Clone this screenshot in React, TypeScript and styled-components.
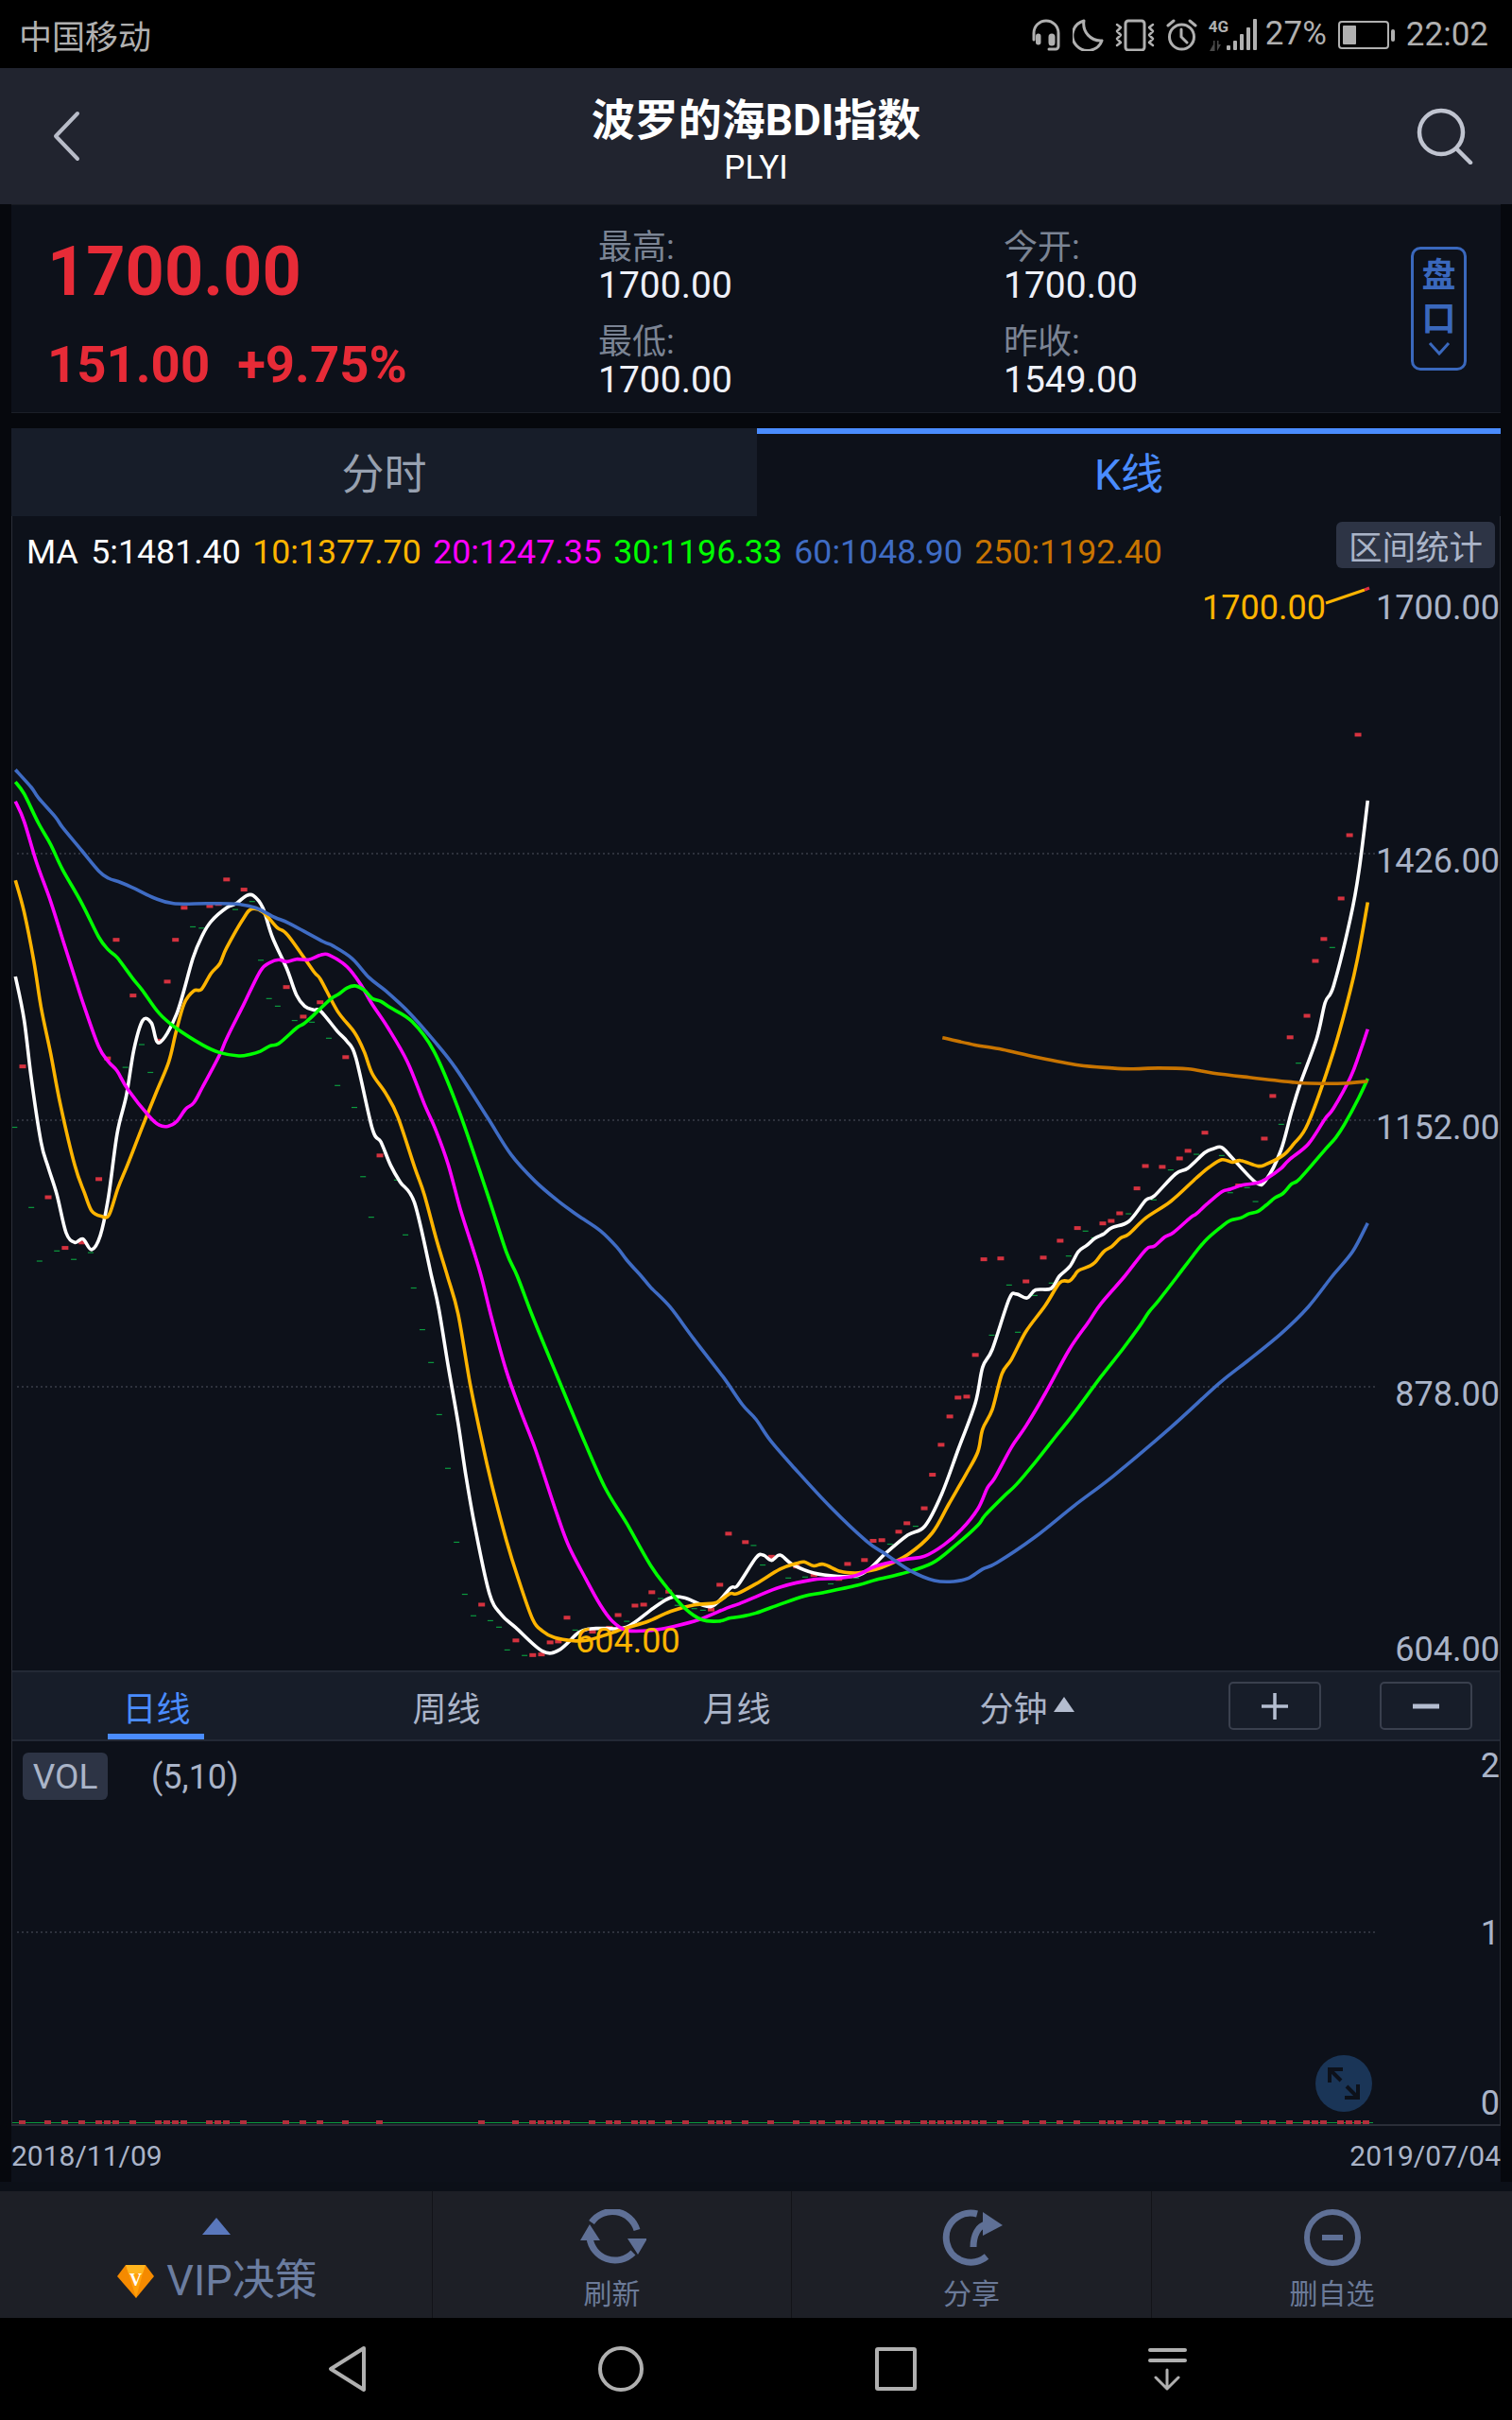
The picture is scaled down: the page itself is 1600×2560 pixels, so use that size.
import React from 'react'
import styled, { createGlobalStyle } from 'styled-components'

const FONT = `Roboto, "Noto Sans CJK SC", sans-serif`

type Pt = [number, number]

// points were read from enlarged parts of the chart, each part has its own origin and scale
const trace = (ox: number, oy: number, sx: number, sy: number) => (...n: number[]): Pt[] => {
  const out: Pt[] = []
  for (let i = 0; i < n.length; i += 2) out.push([ox + n[i] / sx, oy + n[i + 1] / sy])
  return out
}
const upL = trace(0, 650, 1.96, 2.24)
const upR = trace(900, 650, 2.24, 2.24)
const lowL = trace(0, 1350, 1.96, 2.904)
const lowR = trace(800, 1350, 1.96, 2.904)

// catmull-rom through the traced points
const toPath = (pts: Pt[]) => {
  let d = `M${pts[0][0].toFixed(1)} ${pts[0][1].toFixed(1)}`
  for (let i = 0; i < pts.length - 1; i++) {
    const a = pts[Math.max(i - 1, 0)]
    const b = pts[i]
    const c = pts[i + 1]
    const e = pts[Math.min(i + 2, pts.length - 1)]
    const c1x = b[0] + (c[0] - a[0]) / 6
    const c1y = b[1] + (c[1] - a[1]) / 6
    const c2x = c[0] - (e[0] - b[0]) / 6
    const c2y = c[1] - (e[1] - b[1]) / 6
    d += `C${c1x.toFixed(1)} ${c1y.toFixed(1)} ${c2x.toFixed(1)} ${c2y.toFixed(1)} ${c[0].toFixed(1)} ${c[1].toFixed(1)}`
  }
  return d
}

const MA5 = [
  ...upL(32,858,50,960,65,1100,85,1250,100,1310,118,1375,137,1465,155,1488,172,1480,190,1505,208,1472,225,1380,243,1230,262,1140,278,1030,296,962,314,968,330,1015,366,948,400,815,420,760,438,727,470,695,490,685,510,667,525,666,545,695,565,765,595,840,615,902,632,928,650,937,665,940,700,988,720,1012,738,1050,772,1218,790,1250,810,1305,830,1345,860,1395),
  ...lowL(895,0,910,100,930,280,950,450,965,600,985,770,1015,975,1040,1040,1070,1080,1125,1152,1160,1148,1200,1095,1225,1083,1255,1082,1300,1078,1355,1020,1390,988,1420,988,1475,1015,1515,958,1530,950),
  ...lowR(0,865,15,857,32,873,50,857,75,885,120,912,170,922,210,920,235,900,270,850,315,795,350,768,385,670,420,530,455,390,470,280,490,225,525,70,540,55,562,67,580,42,612,38),
  ...upR(495,1568,520,1545,540,1510,560,1495,580,1478,600,1468,620,1453,660,1438,700,1388,720,1378,770,1326,800,1312,840,1275,860,1266,880,1263,905,1288,962,1347,985,1340,1020,1270,1045,1180,1065,1115,1105,1005,1125,920,1145,880,1185,720,1205,610,1226,441),
]
const MA10 = [
  ...upL(32,630,50,705,70,820,85,930,105,1040,125,1160,155,1305,175,1370,190,1413,210,1426,226,1423,245,1358,265,1303,295,1215,325,1130,350,1060,365,990,382,922,402,892,418,888,438,850,456,827,470,790,505,720,522,698,545,705,575,742,597,760,650,845,665,865,700,940,735,990,755,1035,772,1088,800,1135,825,1190,860,1310,880,1375,905,1480),
  ...lowL(928,0,950,115,975,330,1000,510,1020,640,1050,810,1075,930,1105,1055,1125,1090,1150,1110,1190,1120,1220,1118,1260,1100,1300,1080,1345,1060,1390,1030,1440,1010,1480,1005,1495,995,1515,975,1530,975),
  ...lowR(0,945,50,900,85,882,100,878,120,890,140,885,175,907,205,912,225,908,260,895,315,855,365,790,400,700,435,610,460,540,470,470,490,410,510,300,530,255,560,170,600,90,630,20,650,15),
  ...upR(530,1568,540,1555,565,1545,580,1535,600,1510,620,1497,640,1478,660,1468,700,1430,760,1390,820,1335,850,1310,880,1292,905,1298,925,1294,965,1307,985,1303,1025,1282,1050,1255,1085,1205,1145,1035,1185,890,1205,800,1226,682),
]
const MA20 = [
  ...upL(32,443,50,490,75,585,105,680,130,770,155,860,175,930,205,1025,225,1060,243,1082,265,1125,310,1190,330,1210,348,1213,366,1202,385,1172,402,1157,420,1120,455,1045,470,1005,505,925,540,845,560,825,578,818,595,823,615,817,640,818,665,807,683,807,720,835,750,880,770,920,805,980,845,1060,880,1160,905,1225,930,1305,955,1410,980,1500),
  ...lowL(998,0,1020,130,1050,290,1080,415,1110,530,1155,730,1180,830,1215,930,1245,1010,1270,1060,1300,1088,1350,1088,1400,1075,1450,1055,1510,1018,1530,1008),
  ...lowR(0,985,50,955,120,932,170,928,210,918,250,890,310,870,350,860,390,825,425,780,460,715,480,650,495,620,530,525,560,460,600,360,650,225,690,140,715,85),
  ...upR(650,1568,700,1505,720,1497,745,1475,765,1465,805,1430,820,1420,845,1397,880,1368,900,1362,930,1352,965,1347,985,1338,1020,1313,1040,1292,1085,1255,1125,1195,1145,1170,1185,1097,1205,1045,1226,983),
]
const MA30 = [
  ...upL(32,397,50,425,80,495,105,545,130,605,170,685,205,765,225,795,243,813,275,862,295,890,330,945,365,980,420,1020,455,1038,495,1046,520,1042,540,1035,560,1022,578,1017,615,980,630,970,650,950,685,912,702,900,720,885,737,880,755,890,772,910,790,917,810,932,855,965,900,1035,950,1170,1010,1370,1050,1510),
  ...lowL(1073,0,1105,125,1155,305,1210,500,1255,650,1300,760,1350,890,1385,960,1420,1020,1455,1055,1490,1060,1515,1050,1540,1045),
  ...lowR(0,1035,50,1008,100,983,140,972,210,950,250,932,300,915,365,882,415,825,460,765,475,735,515,675,540,640,580,570,620,495,655,430,715,310,760,225,795,155,815,110,835,75),
  ...upR(775,1568,800,1535,840,1485,880,1450,900,1436,925,1430,945,1420,965,1415,985,1400,1005,1383,1025,1372,1045,1350,1065,1337,1125,1268,1150,1240,1170,1210,1205,1145,1226,1100),
]
const MA60 = [
  ...upL(32,368,65,410,80,435,115,480,130,505,170,560,205,608,225,625,250,635,280,650,320,672,360,685,430,685,490,686,530,695,570,718,600,732,670,775,690,785,730,815,765,860,800,892,850,945,900,1010,945,1075,1010,1190,1060,1280,1110,1343,1160,1392,1200,1425,1245,1460,1280,1500,1300,1530),
  ...lowL(1330,0,1350,35,1390,95,1440,195,1500,310,1540,395),
  ...lowR(0,440,30,505,80,590,155,710,230,815,270,855,320,905,370,935,410,938,440,928,470,900,500,880,580,800,660,705,740,615,860,465,960,330,1020,260,1090,175,1145,95),
  ...upR(1142,1568,1190,1510,1226,1442),
]
const MA250 = upR(218,1003,295,1020,360,1031,440,1049,540,1068,620,1075,665,1077,730,1075,800,1077,860,1087,945,1097,1045,1108,1090,1111,1170,1111,1226,1106)

const REDS = [
  ...upL(47,1071,100,1381,135,1501,170,1488,205,1338,223,1052,241,771,276,903,330,1010,347,870,364,771,382,695,435,691,453,686,470,628,506,652,594,883,629,953,664,919,717,1049,788,1282),
  ...lowL(999,1009,1070,1119,1105,1164,1123,1162,1141,1125,1158,1122,1176,1049,1229,1092,1264,1080,1282,1041,1317,1012,1335,1009,1352,971,1387,969,1475,1024,1493,948,1511,791,1546,817),
  ...lowR(32,862,84,892,120,918,172,930,190,884,225,872,243,813,261,811,296,785,313,759,349,713,366,610,384,518,402,431,419,373,437,370,455,242,560,16),
  ...upR(316,1528,356,1526,457,1524,497,1484,538,1454,598,1443,618,1437,638,1419,679,1360,699,1307,739,1309,780,1289,800,1271,840,1228,920,1353,981,1242,1001,1141,1042,1002,1082,951,1102,821,1122,769,1163,673,1183,523,1203,285),
]
const GREENS = [
  ...upL(30,1215,65,1405,82,1532,118,1508,153,1528,188,1512,260,1073,294,1019,312,1085,400,740,418,743,488,699,523,680,541,819,558,910,576,928,611,962,647,966,682,1004,700,1116,735,1168,753,1332,770,1428,823,1340,841,1470),
  ...lowL(858,36,876,164,894,265,911,425,929,590,947,817,964,977,982,1043,1017,1058,1035,1078,1052,1148,1088,1165,1193,1087,1300,1060,1370,990,1405,1011,1440,1021,1458,1026,1563,827),
  ...lowR(14,887,67,927,102,924,155,945,208,927,278,823,331,768,489,181,525,27,543,172,578,59,613,21),
  ...upR(517,1520,557,1461,577,1477,659,1420,719,1387,759,1316,820,1279,880,1282,900,1370,940,1358,960,1391,1021,1208,1062,1063,1142,789),
]

const VOL_RED = new Set([0,3,5,7,9,10,11,13,16,17,18,19,22,23,24,26,31,33,35,38,42,54,58,60,61,62,63,64,67,69,70,72,73,74,76,78,81,82,83,85,88,91,93,94,96,97,99,100,101,103,104,106,107,108,109,110,111,112,113,115,118,120,122,124,127,128,129,131,132,134,136,137,139,143,146,147,149,151,152,153,155,156,157,158])
const VOL_SLOTS = Array.from({ length: 159 }, (_, i) => i)

const LINES = [
  { key: 'ma5', color: '#ffffff', pts: MA5 },
  { key: 'ma10', color: '#ffb400', pts: MA10 },
  { key: 'ma20', color: '#ff00ff', pts: MA20 },
  { key: 'ma30', color: '#00ff00', pts: MA30 },
  { key: 'ma60', color: '#3f6cc4', pts: MA60 },
  { key: 'ma250', color: '#c87400', pts: MA250 },
]

const LEGEND = [
  { text: '5:1481.40', color: '#ffffff' },
  { text: '10:1377.70', color: '#ffb400' },
  { text: '20:1247.35', color: '#ff00ff' },
  { text: '30:1196.33', color: '#00ff00' },
  { text: '60:1048.90', color: '#3f6cc4' },
  { text: '250:1192.40', color: '#c87400' },
]

const GRID_Y = [903, 1185, 1467]
const AXIS = [
  { text: '1700.00', y: 655 },
  { text: '1426.00', y: 923 },
  { text: '1152.00', y: 1205 },
  { text: '878.00', y: 1487 },
  { text: '604.00', y: 1757 },
]

const Global = createGlobalStyle`
  html, body { margin: 0; padding: 0; background: #06080d; }
  * { box-sizing: border-box; }
`

const StatusIcons = () => (
  <S.StatusIcons>
    <svg width="32" height="34" viewBox="0 0 32 34" fill="none" stroke="#b0b0b0" strokeWidth="3" strokeLinecap="round">
      <path d="M3 22V15a13 13 0 0 1 26 0v14a3 3 0 0 1-3 3h-7" />
      <rect x="6.500" y="17" width="2.500" height="9" rx="1.200" fill="#b0b0b0" />
      <rect x="20" y="17" width="4" height="10" rx="2" fill="#b0b0b0" />
    </svg>
    <svg width="33" height="34" viewBox="0 0 33 34" fill="none" stroke="#b0b0b0" strokeWidth="3" strokeLinejoin="round">
      <path d="M12 2A16 16 0 1 0 31 23A18 18 0 0 1 12 2z" />
    </svg>
    <svg width="42" height="34" viewBox="0 0 42 34" fill="none" stroke="#b0b0b0" strokeWidth="3" strokeLinecap="round" strokeLinejoin="round">
      <rect x="11" y="2" width="20" height="31" rx="3" />
      <path d="M2 6l4 3-4 4 4 4-4 4 4 4-4 3M40 6l-4 3 4 4-4 4 4 4-4 4 4 3" strokeWidth="2.500" />
    </svg>
    <svg width="33" height="34" viewBox="0 0 33 34" fill="none" stroke="#b0b0b0" strokeWidth="3" strokeLinecap="round">
      <circle cx="16.500" cy="19" r="13" />
      <path d="M16 11v8l6 6M2 7l6-5M31 7l-6-5" />
    </svg>
    <S.Signal>
      <S.NetLabel>4G</S.NetLabel>
      <svg width="53" height="34" viewBox="0 0 53 34">
        <path d="M1 34l4-7v-4h1.500v11zM9 23v11l4-7h-2.500v-4z" fill="#4a4a4a" />
        <rect x="19" y="28" width="4" height="5" rx="1" fill="#b0b0b0" />
        <rect x="26" y="23" width="4" height="10" rx="1" fill="#b0b0b0" />
        <rect x="33" y="16" width="4" height="17" rx="1" fill="#b0b0b0" />
        <rect x="40" y="9" width="4" height="24" rx="1" fill="#b0b0b0" />
        <rect x="47" y="0" width="4" height="33" rx="1" fill="#b0b0b0" />
      </svg>
    </S.Signal>
    <S.Percent>27%</S.Percent>
    <svg width="60" height="30" viewBox="0 0 60 30" fill="none">
      <rect x="1" y="1" width="52" height="28" rx="3" stroke="#b0b0b0" strokeWidth="2" />
      <rect x="5" y="5" width="14" height="20" rx="1" fill="#b0b0b0" />
      <rect x="56" y="9" width="4" height="13" rx="2" fill="#b0b0b0" />
    </svg>
    <S.Clock>22:02</S.Clock>
  </S.StatusIcons>
)

const VipDiamond = () => (
  <svg width="39" height="36" viewBox="0 0 39 36">
    <path d="M9 1h21l9 12-19 23L0 13z" fill="#f58a00" />
    <path d="M9 1h21l-3 9H12z" fill="#ffb51e" />
    <path d="M12 10h15l-7 26z" fill="#ffa00a" />
    <text x="19.500" y="23" textAnchor="middle" fontSize="18" fontWeight="700" fontFamily="Liberation Serif, serif" fill="#ffffff">V</text>
  </svg>
)

const RefreshIcon = () => (
  <svg width="72" height="60" viewBox="0 0 72 60" fill="none" stroke="#5f7096" strokeWidth="7">
    <path d="M14 14A27 27 0 0 1 62 22" />
    <path d="M58 46A27 27 0 0 1 12 30" />
    <path d="M2 33L12 16l11 17zM52 31h21L63 48z" fill="#5f7096" stroke="none" />
  </svg>
)

const ShareIcon = () => (
  <svg width="68" height="60" viewBox="0 0 68 60" fill="none" stroke="#5f7096" strokeWidth="7">
    <path d="M40 5A26 26 0 1 0 50 50" />
    <path d="M36 40c0-12 5-23 14-24" />
    <path d="M46 3l21 14-21 11z" fill="#5f7096" stroke="none" />
  </svg>
)

const RemoveIcon = () => (
  <svg width="60" height="60" viewBox="0 0 60 60" fill="none" stroke="#5f7096" strokeWidth="6">
    <circle cx="30" cy="30" r="27" />
    <path d="M19 30h22" strokeWidth="6" />
  </svg>
)

const PriceChart = () => (
  <S.ChartSvg width="1574" height="1157" viewBox="13 610 1574 1157">
    {GRID_Y.map(y => (
      <S.GridLine key={y} x1="18" x2="1458" y1={y} y2={y} />
    ))}
    {GREENS.map((p, i) => (
      <rect key={i} x={p[0] - 3} y={p[1] - 0.5} width="6" height="1.200" fill="#0b9a3e" />
    ))}
    {REDS.map((p, i) => (
      <rect key={i} x={p[0] - 3.500} y={p[1] - 2} width="7" height="4" fill="#d5323f" />
    ))}
    {LINES.map(l => (
      <S.MaLine key={l.key} d={toPath(l.pts)} stroke={l.color} />
    ))}
    <path d="M1403 638L1444 624" stroke="#ffb400" strokeWidth="3" />
    <path d="M1444 624L1449 622" stroke="#e03040" strokeWidth="3" />
    <S.MarkText x="1272" y="655">1700.00</S.MarkText>
    <S.MarkText x="609" y="1748">604.00</S.MarkText>
    {AXIS.map(a => (
      <S.AxisText key={a.text} x="1587" y={a.y}>{a.text}</S.AxisText>
    ))}
  </S.ChartSvg>
)

const VolumeChart = () => (
  <S.ChartSvg width="1574" height="335" viewBox="13 1914 1574 335">
    <S.GridLine x1="18" x2="1458" y1="2044" y2="2044" />
    <S.AxisText x="1587" y="2057">1</S.AxisText>
    <S.AxisText x="1587" y="2237">0</S.AxisText>
    <rect x="13" y="2245" width="1440" height="1" fill="#0b9a3e" />
    {VOL_SLOTS.filter(i => VOL_RED.has(i)).map(i => (
      <rect key={i} x={20 + i * 9} y="2243" width="7" height="4" fill="#b32f3c" />
    ))}
    <rect x="13" y="2247" width="1574" height="2" fill="#2a2e38" />
  </S.ChartSvg>
)

export default function App() {
  return (
    <S.Page>
      <Global />
      <S.StatusBar>
        <S.Carrier>中国移动</S.Carrier>
        <StatusIcons />
      </S.StatusBar>

      <S.Header>
        <S.BackIcon>
          <svg width="32" height="56" viewBox="0 0 32 56" fill="none" stroke="#b8bcc8" strokeWidth="4" strokeLinecap="round" strokeLinejoin="round">
            <path d="M28 4L5 28l23 24" />
          </svg>
        </S.BackIcon>
        <S.TitleBlock>
          <S.Title>波罗的海BDI指数</S.Title>
          <S.Subtitle>PLYI</S.Subtitle>
        </S.TitleBlock>
        <S.SearchIcon>
          <svg width="62" height="60" viewBox="0 0 62 60" fill="none" stroke="#c0c4d0" strokeWidth="4.500" strokeLinecap="round">
            <circle cx="27" cy="26" r="23" />
            <path d="M43 43l15 15" />
          </svg>
        </S.SearchIcon>
      </S.Header>

      <S.Quote>
        <S.PriceCol>
          <S.Price>1700.00</S.Price>
          <S.Change>
            <span>151.00</span>
            <span>+9.75%</span>
          </S.Change>
        </S.PriceCol>
        <S.StatCol>
          <S.Stat><S.StatLabel>最高:</S.StatLabel><S.StatValue>1700.00</S.StatValue></S.Stat>
          <S.Stat><S.StatLabel>最低:</S.StatLabel><S.StatValue>1700.00</S.StatValue></S.Stat>
        </S.StatCol>
        <S.StatCol>
          <S.Stat><S.StatLabel>今开:</S.StatLabel><S.StatValue>1700.00</S.StatValue></S.Stat>
          <S.Stat><S.StatLabel>昨收:</S.StatLabel><S.StatValue>1549.00</S.StatValue></S.Stat>
        </S.StatCol>
        <S.DepthButton>
          <span>盘</span>
          <span>口</span>
          <svg width="24" height="15" viewBox="0 0 24 15" fill="none" stroke="#3a68bd" strokeWidth="3">
            <path d="M2 2l10 11L22 2" />
          </svg>
        </S.DepthButton>
      </S.Quote>

      <S.Tabs>
        <S.Tab>分时</S.Tab>
        <S.Tab active>K线</S.Tab>
      </S.Tabs>

      <S.Canvas>
        <S.LegendRow>
          <S.Legend>
            <S.LegendItem color="#ffffff" wide>MA</S.LegendItem>
            {LEGEND.map(l => (
              <S.LegendItem key={l.text} color={l.color}>{l.text}</S.LegendItem>
            ))}
          </S.Legend>
          <S.RangeButton>区间统计</S.RangeButton>
        </S.LegendRow>
        <PriceChart />

        <S.PeriodBar>
          <S.PeriodTab active>日线</S.PeriodTab>
          <S.PeriodTab>周线</S.PeriodTab>
          <S.PeriodTab>月线</S.PeriodTab>
          <S.PeriodTab>分钟<S.Caret /></S.PeriodTab>
          <S.ZoomButtons>
            <S.ZoomButton>
              <svg width="28" height="28" viewBox="0 0 28 28" stroke="#b4bdd0" strokeWidth="3.500"><path d="M0 14h28M14 0v28" /></svg>
            </S.ZoomButton>
            <S.ZoomButton>
              <svg width="28" height="6" viewBox="0 0 28 6" stroke="#b4bdd0" strokeWidth="5"><path d="M0 3h28" /></svg>
            </S.ZoomButton>
          </S.ZoomButtons>
        </S.PeriodBar>

        <S.VolumeHead>
          <S.VolBadge>VOL</S.VolBadge>
          <S.VolParams>(5,10)</S.VolParams>
          <S.VolMax>2</S.VolMax>
        </S.VolumeHead>
        <S.VolumeBody>
          <VolumeChart />
          <S.Expand>
            <svg width="36" height="36" viewBox="0 0 36 36" fill="none" stroke="#0d111a" strokeWidth="4">
              <path d="M3 17V3h14M3 3l12 12M33 19v14H19M33 33L21 21" />
            </svg>
          </S.Expand>
        </S.VolumeBody>
      </S.Canvas>

      <S.DateRow>
        <span>2018/11/09</span>
        <span>2019/07/04</span>
      </S.DateRow>

      <S.Toolbar>
        <S.ToolVip>
          <S.VipCaret />
          <S.VipLabel><VipDiamond />VIP决策</S.VipLabel>
        </S.ToolVip>
        <S.Tool><RefreshIcon /><S.ToolLabel>刷新</S.ToolLabel></S.Tool>
        <S.Tool><ShareIcon /><S.ToolLabel>分享</S.ToolLabel></S.Tool>
        <S.Tool><RemoveIcon /><S.ToolLabel>删自选</S.ToolLabel></S.Tool>
      </S.Toolbar>

      <S.NavBar>
        <svg width="41" height="50" viewBox="0 0 41 50" fill="none" stroke="#b0b0b0" strokeWidth="4" strokeLinejoin="round">
          <path d="M38 3L3 25l35 22z" />
        </svg>
        <svg width="48" height="48" viewBox="0 0 48 48" fill="none" stroke="#b0b0b0" strokeWidth="4">
          <circle cx="24" cy="24" r="22" />
        </svg>
        <svg width="44" height="46" viewBox="0 0 44 46" fill="none" stroke="#b0b0b0" strokeWidth="4">
          <rect x="2" y="2" width="40" height="42" rx="1" />
        </svg>
        <svg width="41" height="46" viewBox="0 0 41 46" fill="none" stroke="#b0b0b0" strokeWidth="4" strokeLinecap="round" strokeLinejoin="round">
          <path d="M2 3h37M2 14h37" />
          <path d="M20 24v20M8 32l12 12 12-12" strokeWidth="3" />
        </svg>
      </S.NavBar>
    </S.Page>
  )
}

const S = {
  Page: styled.div`
    width: 1600px;
    height: 2560px;
    overflow: hidden;
    display: flex;
    flex-direction: column;
    background: #06080d;
    font-family: ${FONT};
  `,
  StatusBar: styled.div`
    height: 72px;
    background: #000;
    display: flex;
    align-items: center;
    justify-content: space-between;
    padding: 0 25px 0 20px;
    color: #b0b0b0;
  `,
  Carrier: styled.div`
    font-size: 35px;
    margin-top: 0;
  `,
  StatusIcons: styled.div`
    display: flex;
    align-items: center;
    gap: 12px;
    margin-top: 1px;
  `,
  Signal: styled.div`
    position: relative;
    width: 53px;
    height: 34px;
  `,
  NetLabel: styled.span`
    position: absolute;
    left: 0;
    top: -1px;
    font-size: 17px;
    line-height: 18px;
    font-weight: 700;
    color: #b0b0b0;
  `,
  Percent: styled.span`
    font-size: 35px;
    margin-left: -5px;
    margin-top: -3px;
  `,
  Clock: styled.span`
    font-size: 35px;
  `,
  Header: styled.div`
    height: 144px;
    background: #21242f;
    display: flex;
    align-items: center;
    justify-content: space-between;
    padding: 0 40px;
  `,
  BackIcon: styled.div`
    width: 100px;
    display: flex;
    padding-left: 14px;
  `,
  SearchIcon: styled.div`
    width: 100px;
    display: flex;
    justify-content: flex-end;
  `,
  TitleBlock: styled.div`
    display: flex;
    flex-direction: column;
    align-items: center;
    color: #fff;
    margin-top: 10px;
  `,
  Title: styled.div`
    font-size: 46px;
    line-height: 54px;
    font-weight: 700;
  `,
  Subtitle: styled.div`
    font-size: 35px;
    line-height: 40px;
    margin-top: 4px;
  `,
  Quote: styled.div`
    margin: 0 12px;
    height: 221px;
    background: #0d111a;
    border-top: 1px solid #181b23;
    border-bottom: 1px solid #1b1f28;
    display: grid;
    grid-template-columns: 621px 429px 431px 59px;
  `,
  PriceCol: styled.div`
    display: flex;
    flex-direction: column;
    padding: 36px 0 0 38px;
    gap: 32px;
    color: #e72b37;
    font-weight: 700;
  `,
  Price: styled.div`
    font-size: 72px;
    line-height: 70px;
  `,
  Change: styled.div`
    display: flex;
    gap: 29px;
    font-size: 54.500px;
    line-height: 60px;
  `,
  StatCol: styled.div`
    display: flex;
    flex-direction: column;
    gap: 22px;
    padding-top: 27px;
  `,
  Stat: styled.div`
    display: flex;
    flex-direction: column;
    gap: 2px;
  `,
  StatLabel: styled.div`
    font-size: 36px;
    line-height: 36px;
    color: #7b8494;
  `,
  StatValue: styled.div`
    font-size: 39px;
    line-height: 40px;
    color: #eef0f8;
  `,
  DepthButton: styled.div`
    margin-top: 44px;
    width: 59px;
    height: 131px;
    border: 3px solid #3a68bd;
    border-radius: 10px;
    color: #3a68bd;
    font-size: 36px;
    line-height: 46px;
    font-weight: 700;
    display: flex;
    flex-direction: column;
    align-items: center;
    padding-top: 5px;
  `,
  Tabs: styled.div`
    margin: 16px 12px 0;
    height: 93px;
    display: grid;
    grid-template-columns: 789px 787px;
  `,
  Tab: styled.div<{ active?: boolean }>`
    display: flex;
    align-items: center;
    justify-content: center;
    padding-bottom: 8px;
    font-size: 45px;
    color: ${p => (p.active ? '#4a8cff' : '#98a1b0')};
    background: ${p => (p.active ? '#0d111a' : '#171d29')};
    border-top: 6px solid ${p => (p.active ? '#4a8cff' : '#171d29')};
  `,
  Canvas: styled.div`
    margin: 0 12px;
    background: #0d111a;
    border-left: 1px solid #2a2e38;
    border-right: 1px solid #2a2e38;
  `,
  LegendRow: styled.div`
    height: 64px;
    display: flex;
    align-items: flex-start;
    justify-content: space-between;
    padding: 6px 5px 0 15px;
  `,
  Legend: styled.div`
    display: flex;
    gap: 12.500px;
    margin-top: 14px;
    font-size: 35.700px;
    line-height: 36px;
  `,
  LegendItem: styled.span<{ color: string; wide?: boolean }>`
    color: ${p => p.color};
    margin-right: ${p => (p.wide ? '1px' : '0')};
  `,
  RangeButton: styled.div`
    width: 168px;
    height: 49px;
    border-radius: 6px;
    background: #2d3445;
    color: #aab4c8;
    font-size: 35.500px;
    display: flex;
    align-items: center;
    justify-content: center;
  `,
  ChartSvg: styled.svg`
    display: block;
  `,
  GridLine: styled.line`
    stroke: #2e323d;
    stroke-width: 2;
    stroke-dasharray: 2 3;
  `,
  MaLine: styled.path`
    fill: none;
    stroke-width: 3.600;
    stroke-linejoin: round;
  `,
  AxisText: styled.text`
    font-family: ${FONT};
    font-size: 36px;
    fill: #aab4c8;
    text-anchor: end;
  `,
  MarkText: styled.text`
    font-family: ${FONT};
    font-size: 36px;
    fill: #ffb400;
  `,
  PeriodBar: styled.div`
    height: 75px;
    background: #171d29;
    border-top: 2px solid #232936;
    border-bottom: 2px solid #232936;
    display: grid;
    grid-template-columns: repeat(4, 307px) 1fr;
    align-items: center;
  `,
  PeriodTab: styled.div<{ active?: boolean }>`
    position: relative;
    height: 100%;
    display: flex;
    align-items: center;
    justify-content: center;
    padding-top: 0;
    margin-left: -2px;
    font-size: 36px;
    color: ${p => (p.active ? '#4a8cff' : '#aab4c8')};
    &::after {
      content: '';
      display: ${p => (p.active ? 'block' : 'none')};
      position: absolute;
      left: 103px;
      bottom: 0;
      width: 102px;
      height: 6px;
      background: #4a8cff;
    }
  `,
  Caret: styled.span`
    width: 0;
    height: 0;
    margin-left: 6px;
    margin-top: -4px;
    border-left: 11px solid transparent;
    border-right: 11px solid transparent;
    border-bottom: 16px solid #b4bdd0;
  `,
  ZoomButtons: styled.div`
    display: flex;
    gap: 62px;
    padding-left: 59px;
  `,
  ZoomButton: styled.div`
    width: 98px;
    height: 51px;
    border: 2px solid #3a404e;
    border-radius: 5px;
    display: flex;
    align-items: center;
    justify-content: center;
  `,
  VolumeHead: styled.div`
    height: 72px;
    display: flex;
    align-items: flex-start;
    padding: 12px 0 0 11px;
    color: #aab4c8;
    font-size: 36px;
  `,
  VolBadge: styled.div`
    width: 90px;
    height: 50px;
    border-radius: 6px;
    background: #2d3445;
    font-size: 37px;
    display: flex;
    align-items: center;
    justify-content: center;
  `,
  VolParams: styled.div`
    margin: 8px 0 0 46px;
    line-height: 36px;
  `,
  VolMax: styled.div`
    margin: -4px 0 0 auto;
    line-height: 36px;
  `,
  VolumeBody: styled.div`
    position: relative;
  `,
  Expand: styled.div`
    position: absolute;
    left: 1379px;
    top: 260px;
    width: 60px;
    height: 60px;
    border-radius: 50%;
    background: #1a3557;
    display: flex;
    align-items: center;
    justify-content: center;
  `,
  DateRow: styled.div`
    margin: 0 12px;
    height: 59px;
    background: #0d111a;
    display: flex;
    align-items: center;
    justify-content: space-between;
    padding-top: 3px;
    font-size: 30px;
    color: #aab4c8;
  `,
  Toolbar: styled.div`
    height: 144px;
    border-top: 10px solid #0c1018;
    background: #1d1f26;
    display: grid;
    grid-template-columns: 457px 380px 381px 382px;
  `,
  Tool: styled.div`
    display: flex;
    flex-direction: column;
    align-items: center;
    padding-top: 19px;
    border-left: 1px solid #121318;
  `,
  ToolVip: styled.div`
    display: flex;
    flex-direction: column;
    align-items: center;
    padding: 28px 0 0 3px;
  `,
  VipCaret: styled.div`
    width: 0;
    height: 0;
    margin-left: -3px;
    border-left: 15px solid transparent;
    border-right: 15px solid transparent;
    border-bottom: 18px solid #5a78bd;
  `,
  VipLabel: styled.div`
    display: flex;
    align-items: center;
    gap: 13px;
    margin-top: 24px;
    font-size: 45px;
    line-height: 50px;
    color: #6b7da0;
  `,
  ToolLabel: styled.div`
    margin-top: 15px;
    font-size: 30px;
    line-height: 30px;
    color: #6b7a98;
  `,
  NavBar: styled.div`
    height: 108px;
    background: #000;
    display: flex;
    align-items: center;
    gap: 245px;
    padding-left: 347px;
  `,
}
